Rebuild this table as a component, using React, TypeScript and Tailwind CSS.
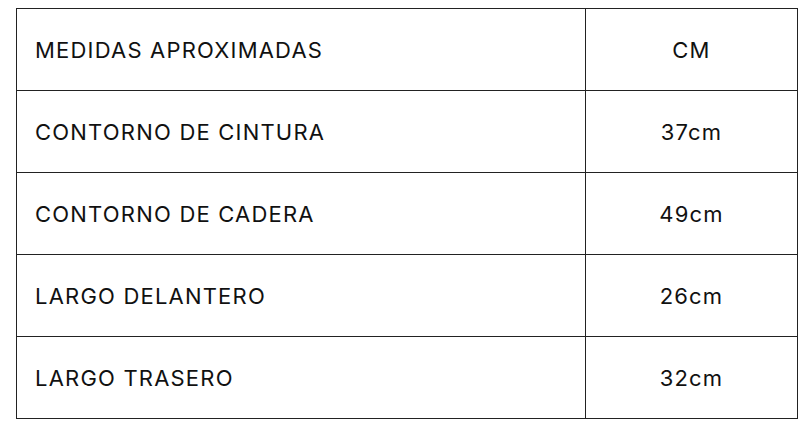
const rows: [string, string][] = [
  ['MEDIDAS APROXIMADAS', 'CM'],
  ['CONTORNO DE CINTURA', '37cm'],
  ['CONTORNO DE CADERA', '49cm'],
  ['LARGO DELANTERO', '26cm'],
  ['LARGO TRASERO', '32cm'],
];

export default function App() {
  return (
    <div className="min-h-screen bg-white pt-2 pl-4 pr-[13px] font-['Inter',sans-serif] text-[#111]">
      <table className="w-[782px] border-collapse border border-[#6b6b6b]">
        <tbody>
          {rows.map(([label, value]) => (
            <tr key={label} className="h-[82px]">
              <td className="w-[569px] border border-[#222] pl-[18px] text-[22px] leading-none tracking-[1.2px]">
                {label}
              </td>
              <td className="border border-[#222] text-center text-[22px] leading-none tracking-[1.2px]">
                {value}
              </td>
            </tr>
          ))}
        </tbody>
      </table>
    </div>
  );
}
